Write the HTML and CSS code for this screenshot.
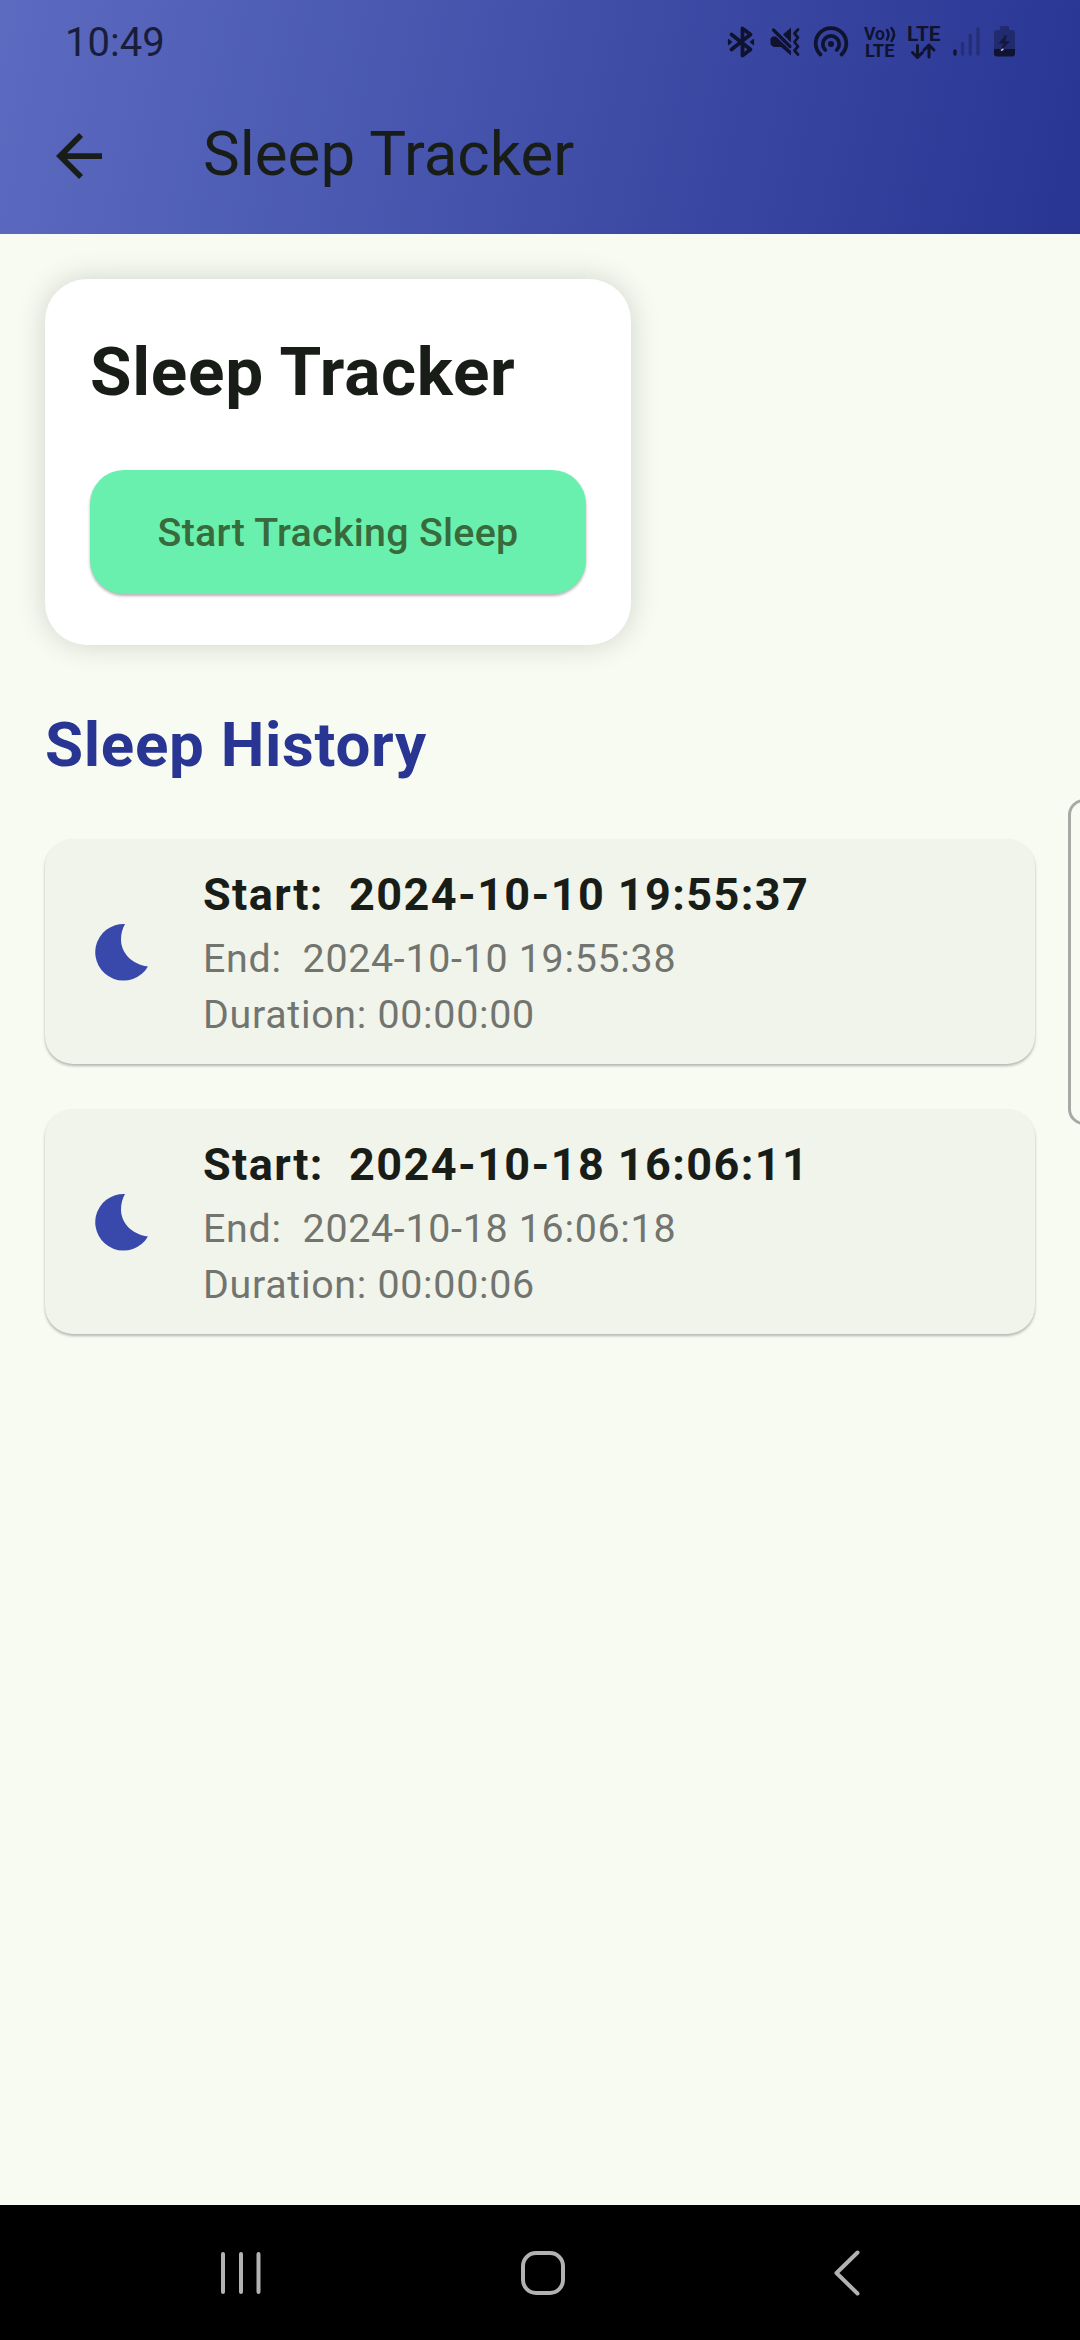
FILE: index.html
```html
<!DOCTYPE html>
<html lang="en">
<head>
<meta charset="utf-8">
<title>Sleep Tracker</title>
<link rel="stylesheet" href="styles.css">
</head>
<body>
<div class="screen">
  <header class="header">
    <div class="status-bar">
      <span class="clock">10:49</span>
      <div class="status-icons">
        <svg width="42" height="48" viewBox="727 18 42 48" fill="none" stroke="currentColor" stroke-width="3.800" stroke-linejoin="round" stroke-linecap="round"><path d="M731.500 34.500L750.500 49.500L742.500 55.500V28.500L750.500 34.500L731.500 49.500"/><path d="M728.500 39.500L731.500 42L728.500 44.500zM753.500 39.500L750.500 42L753.500 44.500z" stroke-width="1.200" fill="currentColor"/></svg>
        <svg width="44" height="48" viewBox="769 18 44 48" fill="none" stroke="currentColor" stroke-linejoin="round" stroke-linecap="round"><path d="M783 34.500L791 27.500V42.500zM772.500 36.500H776L791 51V55.500L781 47H773.500L770.500 44.500V38.500z" fill="currentColor" stroke="none"/><path d="M773.500 30L790 46.500" stroke-width="3.200"/><path d="M798 29.500L794.500 33.500L798 37.500L794.500 42L798 46.500L794.500 50.500L798 54.500" stroke-width="2.800"/></svg>
        <svg width="50" height="48" viewBox="813 18 50 48" fill="none" stroke="currentColor" stroke-width="3.800" stroke-linecap="round"><path d="M820.500 54.500A15.300 15.300 0 1 1 841.500 54.500"/><path d="M825.300 50A8.200 8.200 0 1 1 836.700 50"/><circle cx="831" cy="44" r="3" fill="currentColor" stroke="none"/></svg>
        <svg width="43" height="48" viewBox="863 18 43 48"><text x="864" y="40" textLength="21" lengthAdjust="spacingAndGlyphs" class="tiny-label">Vo</text><text x="865" y="57" textLength="29.500" lengthAdjust="spacingAndGlyphs" class="tiny-label">LTE</text><path d="M887 30Q890 34.500 887 39.500M891.500 28Q896.500 34.500 891.500 41" fill="none" stroke="currentColor" stroke-width="2.500" stroke-linecap="round"/></svg>
        <svg width="46" height="48" viewBox="906 18 46 48"><text x="907" y="40.500" textLength="33.500" lengthAdjust="spacingAndGlyphs" class="small-label">LTE</text><path d="M917.500 45.500V57M912.500 52.500L917.500 57.500L922.500 52.500M929 57V45.500M924 50L929 45L934 50" fill="none" stroke="currentColor" stroke-width="3" stroke-linecap="round" stroke-linejoin="round"/></svg>
        <svg width="42" height="48" viewBox="952 18 42 48" stroke="currentColor" stroke-width="3.400" stroke-linecap="round"><path d="M955 51V54"/><path d="M962.500 43.500V54M970.300 35.500V54M978 29V54" opacity=".3"/></svg>
        <svg width="22" height="48" viewBox="994 18 22 48" fill="currentColor"><path d="M1000 27.500Q1000 26 1001.500 26H1007.500Q1009 26 1009 27.500V30H1012Q1015 30 1015 33V49H994V33Q994 30 997 30H1000z" opacity=".4"/><path d="M994 49H1015V53.500Q1015 56.500 1012 56.500H997Q994 56.500 994 53.500z"/><path d="M1005.500 35L998.500 43.500H1003L1001 49H1003L1010 41H1005.500L1007 35z" opacity=".7"/><path d="M1001 50.500L1003.500 49" stroke="#bbbdd0" stroke-width="1.500"/></svg>
      </div>
    </div>
    <div class="app-bar">
      <svg width="46" height="46" viewBox="4 4 16 16" fill="currentColor"><path d="M20 11H7.830l5.590-5.590L12 4l-8 8 8 8 1.410-1.410L7.830 13H20v-2z"/></svg>
      <h1 class="app-title">Sleep Tracker</h1>
    </div>
  </header>
  <main class="content">
    <section class="tracker-card">
      <h2 class="tracker-title">Sleep Tracker</h2>
      <button class="start-button">Start Tracking Sleep</button>
    </section>
    <h2 class="history-title">Sleep History</h2>
    <div class="history">
      <article class="entry">
        <svg width="54" height="58" viewBox="0 0 54 58"><path d="M30 1A28.300 28.300 0 1 0 53 43.500C36 41 26 29.500 26 16.500C26 10.500 27.500 5.500 30 1z" fill="#3949ab"/></svg>
        <div class="entry-text">
          <p class="entry-start">Start:&nbsp; 2024-10-10 19:55:37</p>
          <p class="entry-line">End:&nbsp; 2024-10-10 19:55:38</p>
          <p class="entry-line">Duration: 00:00:00</p>
        </div>
      </article>
      <article class="entry">
        <svg width="54" height="58" viewBox="0 0 54 58"><path d="M30 1A28.300 28.300 0 1 0 53 43.500C36 41 26 29.500 26 16.500C26 10.500 27.500 5.500 30 1z" fill="#3949ab"/></svg>
        <div class="entry-text">
          <p class="entry-start">Start:&nbsp; 2024-10-18 16:06:11</p>
          <p class="entry-line">End:&nbsp; 2024-10-18 16:06:18</p>
          <p class="entry-line">Duration: 00:00:06</p>
        </div>
      </article>
    </div>
  </main>
  <div class="edge-panel"></div>
  <nav class="nav-bar">
    <svg width="44" height="46" viewBox="0 0 44 46" fill="none" stroke="currentColor" stroke-width="4" stroke-linecap="round"><path d="M4 4V42M22 4V42M39.500 4V42"/></svg>
    <svg width="44" height="46" viewBox="0 0 44 46" fill="none" stroke="currentColor" stroke-width="4"><rect x="2" y="3" width="40" height="40" rx="13"/></svg>
    <svg width="44" height="46" viewBox="0 0 44 46" fill="none" stroke="currentColor" stroke-width="4" stroke-linecap="round" stroke-linejoin="round"><path d="M23.500 2.500L2.500 23L23.500 43.500"/></svg>
  </nav>
</div>
</body>
</html>
```

FILE: styles.css
```css
* { box-sizing: border-box; }
body { margin: 0; font-family: Roboto, "Liberation Sans", sans-serif; color: #191d17; }
h1, h2, p { margin: 0; }
svg { display: block; flex: none; }
.screen { position: relative; display: flex; flex-direction: column; width: 1080px; height: 2340px; overflow: hidden; background: #f8fbf1; }
.header { flex: none; height: 234px; background: linear-gradient(102.2deg, #5c6bc0, #283593); }
.status-bar { display: flex; align-items: center; justify-content: space-between; height: 84px; padding: 0 64px 0 65px; color: #10132f; }
.clock { font-size: 40px; color: #191d3a; }
.status-icons { display: flex; align-items: center; }
.tiny-label { font: 700 17.5px Roboto, sans-serif; fill: currentColor; }
.small-label { font: 700 20px Roboto, sans-serif; fill: currentColor; }
.app-bar { display: flex; align-items: center; height: 144px; padding-left: 56px; }
.app-title { margin: 0 0 4px 101px; font-size: 61.875px; font-weight: 400; line-height: 79px; }
.content { flex: 1; padding: 45px; }
.tracker-card { width: 586px; height: 366px; padding: 45px; border-radius: 42px; background: #fff; box-shadow: 0 0 30px rgba(0, 0, 0, .16); }
.tracker-title { font-size: 67.5px; font-weight: 700; line-height: 96px; letter-spacing: .703px; }
.start-button { display: block; width: 496px; height: 124px; margin-top: 50px; padding: 0; border: 0; border-radius: 34px; background: #69f0ae; color: #386a3b; font: 500 39.375px Roboto, sans-serif; letter-spacing: .281px; box-shadow: 0 2px 3px rgba(0, 0, 0, .3); }
.history-title { margin-top: 60px; font-size: 61.875px; font-weight: 700; line-height: 80px; letter-spacing: .703px; color: #283593; }
.history { display: grid; gap: 45px; margin-top: 54px; }
.entry { display: flex; align-items: center; height: 225px; padding-left: 50px; border-radius: 28px; background: #f1f4eb; box-shadow: 0 2px 3px rgba(0, 0, 0, .28); }
.entry-text { margin-left: 54px; }
.entry-start { padding-bottom: 2px; font-size: 45px; font-weight: 700; line-height: 68px; letter-spacing: 1.406px; }
.entry-line { font-size: 39.375px; line-height: 56px; letter-spacing: .703px; color: #72756f; }
.edge-panel { position: absolute; top: 799px; right: -20px; width: 32px; height: 326px; border: 3px solid #a7aaa4; border-radius: 16px; }
.nav-bar { flex: none; display: grid; grid-template-columns: 302px 313px 44px; align-items: center; height: 135px; padding-left: 219px; background: #000; color: #b2b2b2; }
```
